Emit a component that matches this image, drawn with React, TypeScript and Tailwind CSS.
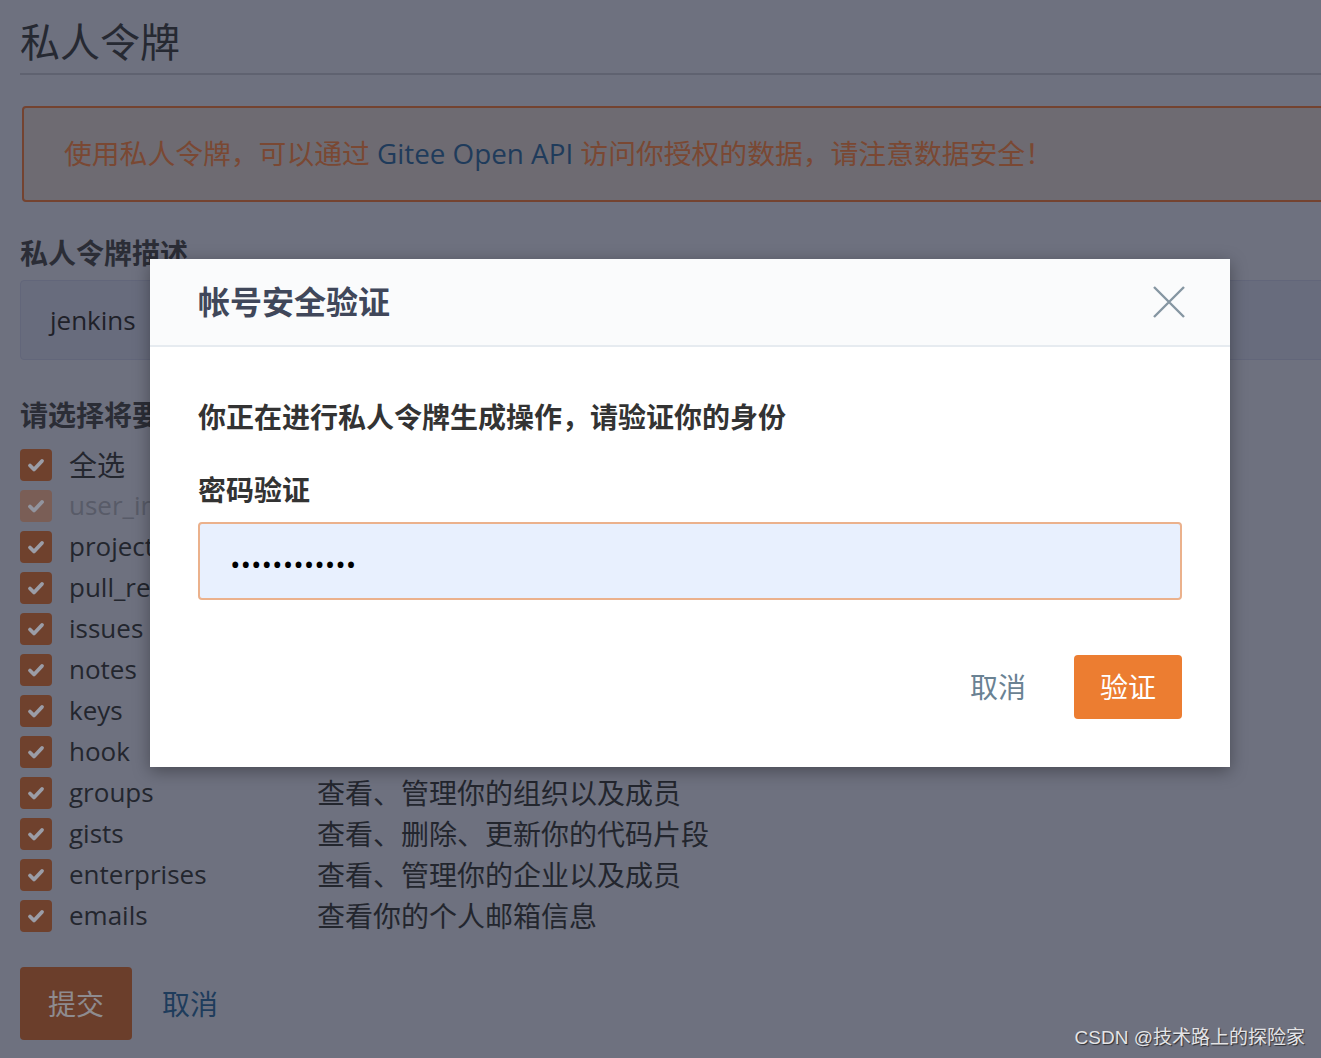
import React from "react";

const scopes = [
  { name: "全选", desc: "", cjk: true },
  { name: "user_info", desc: "访问你的个人信息、最新动态等", disabled: true },
  { name: "projects", desc: "查看、创建、更新你的项目" },
  { name: "pull_requests", desc: "查看、发布、更新你的 Pull Request" },
  { name: "issues", desc: "查看、发布、更新你的 Issue" },
  { name: "notes", desc: "查看、发布、管理你在项目、代码片段中的评论" },
  { name: "keys", desc: "查看、部署、删除你的公钥" },
  { name: "hook", desc: "查看、部署、更新你的第三方服务" },
  { name: "groups", desc: "查看、管理你的组织以及成员" },
  { name: "gists", desc: "查看、删除、更新你的代码片段" },
  { name: "enterprises", desc: "查看、管理你的企业以及成员" },
  { name: "emails", desc: "查看你的个人邮箱信息" },
];

function CheckBox({ disabled }: { disabled?: boolean }) {
  return (
    <span
      className={
        disabled
          ? "flex w-8 h-8 shrink-0 items-center justify-center rounded-[4px] bg-[#7a5e56]"
          : "flex w-8 h-8 shrink-0 items-center justify-center rounded-[4px] bg-[#6f412d]"
      }
    >
      <svg width="20" height="20" viewBox="0 0 20 20">
        <path
          d="M4 10.5l4 4 8-8.5"
          fill="none"
          stroke={disabled ? "#92949e" : "#9b9da7"}
          strokeWidth="3.8"
          strokeLinecap="round"
          strokeLinejoin="round"
        />
      </svg>
    </span>
  );
}

export default function App() {
  return (
    <div className="relative w-[1321px] h-[1058px] overflow-hidden bg-[#6e717f] font-['Open_Sans','Noto_Sans_CJK_SC',sans-serif]">
      {/* page under the dimmed overlay */}
      <div className="w-[1400px] pl-5 pt-4">
        <div className="border-b-2 border-[#5f6270] pb-[5px]">
          <h1 className="text-[40px] leading-[52px] text-[#262932]">私人令牌</h1>
        </div>

        <div className="mt-[31px] ml-[2px] flex h-[96px] items-center rounded-[4px] border-2 border-[#744330] bg-[#6e6b72] px-10 text-[27.8px] text-[#7a4833]">
          使用私人令牌，可以通过&nbsp;<span className="text-[#1f3b5b]">Gitee Open API</span>&nbsp;访问你授权的数据，请注意数据安全！
        </div>

        <div className="mt-[33px] text-[28px] leading-9 font-bold text-[#2b2d36]">私人令牌描述</div>
        <div className="mt-[9px] flex h-[80px] items-center rounded-[4px] border border-[#62667a] bg-[#686c7d] px-[29px] text-[26px] text-[#1f2129]">
          jenkins
        </div>

        <div className="mt-[37px] text-[28px] leading-9 font-bold text-[#2b2d36]">请选择将要授予该令牌的权限</div>
        <div className="mt-[11px] flex flex-col">
          {scopes.map((s) => (
            <div key={s.name} className="flex h-[41px] items-center">
              <CheckBox disabled={s.disabled} />
              <span
                className={
                  s.disabled
                    ? "ml-[17px] w-[248px] text-[26px] text-[#585b68]"
                    : s.cjk
                    ? "ml-[17px] w-[248px] text-[28px] text-[#23262e]"
                    : "ml-[17px] w-[248px] text-[26px] text-[#23262e]"
                }
              >
                {s.name}
              </span>
              <span className="text-[28px] text-[#23262e]">{s.desc}</span>
            </div>
          ))}
        </div>

        <div className="mt-[31px] flex items-center gap-[30px]">
          <button className="h-[73px] w-[112px] rounded-[4px] bg-[#6b3e2b] text-[28px] text-[#8e8b8f]">提交</button>
          <span className="text-[28px] text-[#1e3c5c]">取消</span>
        </div>
      </div>

      {/* modal */}
      <div className="absolute left-[150px] top-[259px] w-[1080px] bg-white shadow-[0_4px_16px_rgba(0,0,0,0.35)]">
        <div className="flex h-[88px] items-center justify-between border-b-2 border-[#e6ebf0] bg-[#fafbfc] pl-12 pr-[44px]">
          <span className="text-[32px] font-bold text-[#40475a]">帐号安全验证</span>
          <svg width="34" height="34" viewBox="0 0 34 34">
            <path d="M2 2L32 32M32 2L2 32" stroke="#8596a2" strokeWidth="2.4" fill="none" />
          </svg>
        </div>
        <div className="px-12 pt-[52px] pb-12">
          <div className="text-[28px] leading-9 font-bold text-[#333333]">你正在进行私人令牌生成操作，请验证你的身份</div>
          <div className="mt-[37px] text-[28px] leading-9 font-bold text-[#333333]">密码验证</div>
          <input
            type="password"
            readOnly
            defaultValue="abcdefghijkl"
            className="mt-[14px] h-[78px] w-full rounded-[4px] border-2 border-[#ebb18c] bg-[#e8f0fe] px-[30px] pt-[6px] text-[28px] text-black outline-none"
          />
          <div className="mt-[55px] flex items-center justify-end gap-12">
            <span className="text-[28px] text-[#6a8293]">取消</span>
            <button className="h-16 w-[108px] rounded-[4px] bg-[#ec7d31] text-[28px] text-white">验证</button>
          </div>
        </div>
      </div>

      <div className="absolute right-[16px] bottom-[6px] text-[19px] text-[#e4e4e6] [text-shadow:1px_1px_1px_rgba(0,0,0,0.6)] font-['Liberation_Sans','Noto_Sans_CJK_SC',sans-serif]">
        CSDN @技术路上的探险家
      </div>
    </div>
  );
}
